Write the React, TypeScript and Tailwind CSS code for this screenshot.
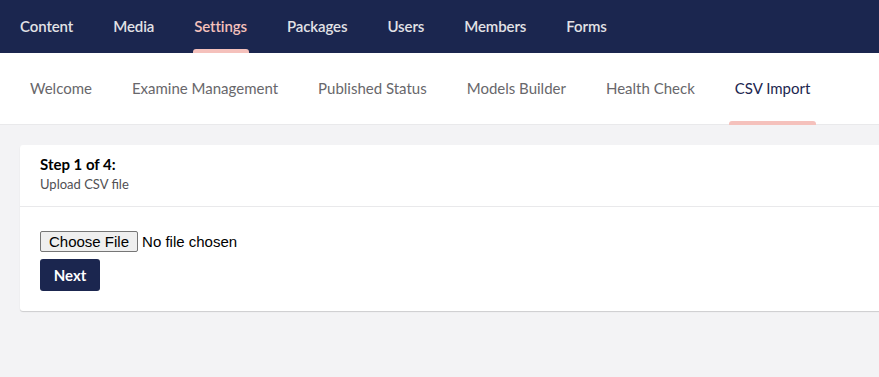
import React from "react";

const topNav = ["Content", "Media", "Settings", "Packages", "Users", "Members", "Forms"];
const subTabs = ["Welcome", "Examine Management", "Published Status", "Models Builder", "Health Check", "CSV Import"];

export default function App() {
  const activeSection = "Settings";
  const activeTab = "CSV Import";

  return (
    <div className="w-[879px] h-[377px] overflow-hidden bg-[#f3f3f5] font-['Lato','Open_Sans',sans-serif]">
      {/* section header */}
      <div className="h-[53px] bg-[#1b264f] flex items-stretch pl-[20px]">
        {topNav.map((item) => (
          <div key={item} className="relative flex items-center mr-[40px] text-[15px] font-semibold pb-[1px] tracking-[-0.1px]">
            <span className={item === activeSection ? "text-[#f5c1bc]" : "text-[#e2e2e6]"}>{item}</span>
            {item === activeSection && (
              <div className="absolute bottom-0 left-[-1px] right-[-2px] h-[4px] rounded-t-[3px] bg-[#f5c1bc]" />
            )}
          </div>
        ))}
      </div>

      {/* sub tabs */}
      <div className="h-[72px] bg-white border-b border-[#e9e9eb] flex items-stretch pl-[30px]">
        {subTabs.map((tab) => (
          <div key={tab} className="relative flex items-center mr-[40px] text-[15px] pb-[1px]">
            <span className={tab === activeTab ? "text-[#1b264f]" : "text-[#68676b]"}>{tab}</span>
            {tab === activeTab && (
              <div className="absolute bottom-[-1px] left-[-6px] right-[-6px] h-[4px] rounded-t-[3px] bg-[#f5c1bc]" />
            )}
          </div>
        ))}
      </div>

      {/* content */}
      <div className="pt-[20px] pl-[20px]">
        <div className="w-[900px] bg-white rounded-[3px] shadow-[0_1px_1px_rgba(0,0,0,0.16)]">
          <div className="px-[20px] pt-[8px] pb-[13px] border-b border-[#e9e9eb]">
            <div className="text-[15px] font-bold text-[#000] leading-[22px]">Step 1 of 4:</div>
            <div className="text-[13px] text-[#515054] leading-[18px]">Upload CSV file</div>
          </div>
          <div className="px-[20px] pt-[24px] pb-[20px]">
            <input
              type="file"
              className="block text-[15px] leading-[21px] text-black font-['Liberation_Sans',Arial,sans-serif] file:text-[15px] file:leading-[17px] file:px-[8px] file:py-0 file:h-[21px] file:mr-[4px] file:border file:border-[#767676] file:bg-[#efefef] file:rounded-[2px] file:text-black"
            />
            <button className="mt-[7px] h-[32px] w-[60px] bg-[#1b264f] rounded-[3px] text-white font-bold text-[15px]">
              Next
            </button>
          </div>
        </div>
      </div>
    </div>
  );
}
